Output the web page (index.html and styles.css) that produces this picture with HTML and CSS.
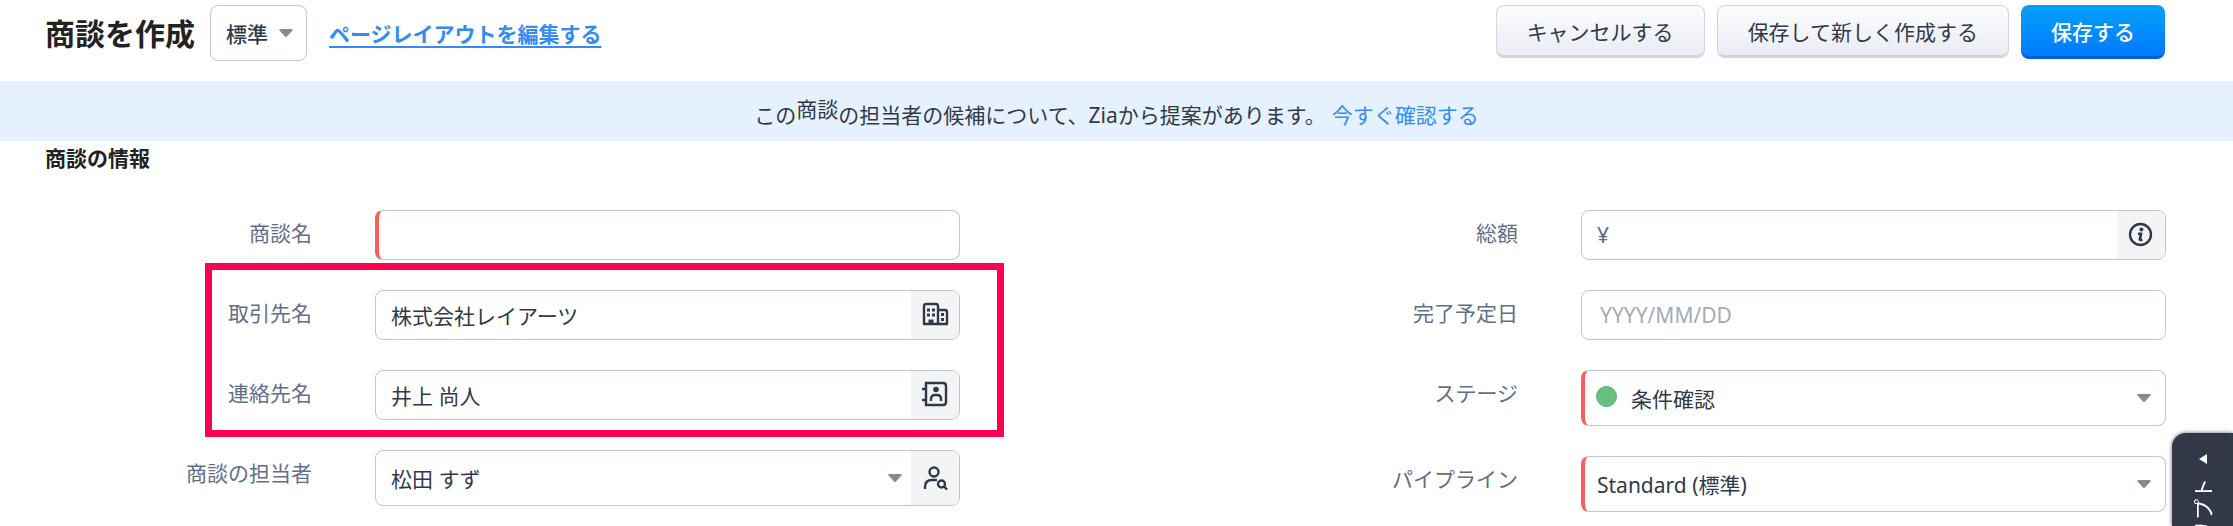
FILE: index.html
```html
<!DOCTYPE html>
<html lang="ja">

<head>
    <meta charset="UTF-8">
    <meta name="viewport" content="width=device-width, initial-scale=1.0">
    <title>商談を作成</title>
    <link rel="stylesheet" href="styles.css">
</head>

<body>
    <header class="page-header">
        <h1>商談を作成</h1>
        <div class="layout-select">
            <select aria-label="レイアウト">
                <option>標準</option>
            </select>
            <svg class="arrow" viewBox="0 0 14 8"><path d="M0.5 0h13v1.5L8 7.5q-1 1-2 0L0.5 1.5z"/></svg>
        </div>
        <a class="edit-layout" href="#">ページレイアウトを編集する</a>
        <div class="actions">
            <button type="button" class="btn">キャンセルする</button>
            <button type="button" class="btn">保存して新しく作成する</button>
            <button type="submit" form="deal-form" class="btn btn-primary">保存する</button>
        </div>
    </header>

    <div class="zia-banner">
        <p>この<span class="module-name">商談</span>の担当者の候補について、Ziaから提案があります。<a href="#">今すぐ確認する</a></p>
    </div>

    <main>
        <h2>商談の情報</h2>
        <form id="deal-form" class="form-grid">
            <div class="form-column">
                <div class="row">
                    <label for="deal-name">商談名</label>
                    <div class="field required">
                        <input type="text" id="deal-name">
                    </div>
                </div>
                <div class="highlight">
                    <div class="row">
                        <label for="account-name">取引先名</label>
                        <div class="field">
                            <input type="text" id="account-name" value="株式会社レイアーツ">
                            <button type="button" class="addon" aria-label="取引先を選択">
                                <svg width="28" height="28" viewBox="0 0 28 28" fill="none" stroke="#313949" stroke-width="2.4">
                                    <path d="M3 23V5q0-2 2-2h10q2 0 2 2v18M17 9h7q2 0 2 2v12M2 23h25"/>
                                    <path fill="#313949" stroke="none" d="M6 7.500h3v3H6zM11 7.500h3v3h-3zM6 12.500h3v3H6zM11 12.500h3v3h-3zM7.500 18.500h5V23h-5zM20 12h3v3h-3zM20 17h3v3h-3z"/>
                                </svg>
                            </button>
                        </div>
                    </div>
                    <div class="row">
                        <label for="contact-name">連絡先名</label>
                        <div class="field">
                            <input type="text" id="contact-name" value="井上 尚人">
                            <button type="button" class="addon" aria-label="連絡先を選択">
                                <svg width="28" height="28" viewBox="0 0 28 28" fill="none" stroke="#313949" stroke-width="2.4">
                                    <path d="M5 2h17q3 0 3 3v16q0 3-3 3H5zM1 8h4M1 19h4"/>
                                    <path d="M10 20v-2q0-4 4-4h2q4 0 4 4v2"/>
                                    <circle cx="15" cy="8.500" r="2.800" fill="#313949" stroke="none"/>
                                </svg>
                            </button>
                        </div>
                    </div>
                </div>
                <div class="row">
                    <label for="owner">商談の担当者</label>
                    <div class="field field-select">
                        <select id="owner">
                            <option>松田 すず</option>
                        </select>
                        <svg class="arrow arrow-addon" viewBox="0 0 14 8"><path d="M0.5 0h13v1.500L8 7.500q-1 1-2 0L0.5 1.500z"/></svg>
                        <button type="button" class="addon" aria-label="担当者を検索">
                            <svg width="28" height="28" viewBox="0 0 28 28" fill="none" stroke="#313949" stroke-width="2.4">
                                <circle cx="13" cy="8" r="4.500"/>
                                <path d="M4 25v-2q0-7 7-7h5"/>
                                <circle cx="20.500" cy="20" r="3.500"/>
                                <path d="M23 22.500l3 3"/>
                            </svg>
                        </button>
                    </div>
                </div>
            </div>

            <div class="form-column">
                <div class="row">
                    <label for="amount">総額</label>
                    <div class="field">
                        <span class="currency">¥</span>
                        <input type="text" id="amount">
                        <button type="button" class="addon" aria-label="総額の説明">
                            <svg width="28" height="28" viewBox="0 0 28 28" fill="none" stroke="#313949" stroke-width="2.4">
                                <circle cx="13.500" cy="13.500" r="10.500"/>
                                <circle cx="14.400" cy="8.500" r="2" fill="#313949" stroke="none"/>
                                <path d="M11 12.700h3l-1.200 5.800q0 1 2.500 0" stroke-width="2.600"/>
                            </svg>
                        </button>
                    </div>
                </div>
                <div class="row">
                    <label for="closing-date">完了予定日</label>
                    <div class="field">
                        <input type="text" id="closing-date" class="date" placeholder="YYYY/MM/DD">
                    </div>
                </div>
                <div class="row">
                    <label for="stage">ステージ</label>
                    <div class="field field-select required">
                        <span class="stage-dot"></span>
                        <select id="stage">
                            <option>条件確認</option>
                        </select>
                        <svg class="arrow" viewBox="0 0 14 8"><path d="M0.5 0h13v1.500L8 7.500q-1 1-2 0L0.5 1.500z"/></svg>
                    </div>
                </div>
                <div class="row">
                    <label for="pipeline">パイプライン</label>
                    <div class="field field-select required">
                        <select id="pipeline">
                            <option>Standard (標準)</option>
                        </select>
                        <svg class="arrow" viewBox="0 0 14 8"><path d="M0.5 0h13v1.500L8 7.500q-1 1-2 0L0.5 1.500z"/></svg>
                    </div>
                </div>
            </div>
        </form>
    </main>

    <button type="button" class="side-tab">
        <svg width="8" height="10" viewBox="0 0 8 10"><path d="M8 0v10L0 5z" fill="#fff"/></svg>
        <span>リプト</span>
    </button>
</body>

</html>
```

FILE: styles.css
```css
* {
    box-sizing: border-box;
}

body {
    margin: 0;
    font-family: "Noto Sans", "Noto Sans CJK JP", sans-serif;
    font-size: 21px;
    line-height: 30px;
    color: #313949;
    background-color: #fff;
    overflow: hidden;
}

button,
input,
select {
    font: inherit;
    color: inherit;
}

a {
    color: #338cf3;
}

.page-header {
    display: flex;
    align-items: flex-start;
    padding: 5px 68px 20px 45px;
}

h1 {
    margin: 0 15px 0 0;
    font-size: 30px;
    line-height: 58px;
    height: 56px;
    color: #222;
}

.layout-select {
    display: flex;
    align-items: center;
    position: relative;
    height: 56px;
    border: 1px solid #c0c6cf;
    border-radius: 8px;
    font-weight: 500;
}

.layout-select select {
    height: 54px;
    padding: 2px 38px 0 15px;
}

.arrow {
    width: 14px;
    height: 8px;
    fill: #858b95;
    pointer-events: none;
}

.layout-select .arrow {
    position: absolute;
    right: 13px;
}

select {
    appearance: none;
    border: none;
    background: none;
    outline: none;
}

.edit-layout {
    height: 56px;
    margin-left: 22px;
    line-height: 58px;
    font-weight: 700;
    text-underline-offset: 4px;
    text-decoration-thickness: 2px;
}

.actions {
    display: flex;
    gap: 12px;
    margin-left: auto;
}

.btn {
    height: 53px;
    padding: 2px 30px 0;
    border: 1px solid #d1d5e0;
    border-bottom-width: 3px;
    border-radius: 8px;
    background: linear-gradient(#fcfdff, #e9ecf4);
    cursor: pointer;
}

.btn-primary {
    height: 54px;
    border: none;
    border-bottom: 3px solid #0061d5;
    background: linear-gradient(#02a1f8, #0279ff);
    color: #fff;
    font-weight: 500;
}

.zia-banner {
    height: 60px;
    background-color: #e5f1fe;
    text-align: center;
}

.zia-banner p {
    margin: 0;
    line-height: 68px;
}

.zia-banner a {
    margin-left: 6px;
    text-decoration: none;
}

.module-name {
    display: inline-block;
    line-height: 30px;
    vertical-align: 6px;
}

main {
    padding: 0 67px 0 45px;
}

h2 {
    margin: 0;
    padding: 2px 0 37px;
    font-size: 21px;
    line-height: 30px;
    color: #222;
}

.form-grid {
    display: grid;
    grid-template-columns: 1fr 1fr;
    gap: 291px;
}

.form-column,
.highlight {
    display: flex;
    flex-direction: column;
    gap: 30px;
}

.row {
    display: grid;
    grid-template-columns: 267px 1fr;
    gap: 63px;
}

.row label {
    line-height: 46px;
    text-align: right;
    color: #616e88;
}

.field {
    display: flex;
    align-items: center;
    height: 50px;
    border: 1px solid #c0c6cf;
    border-radius: 8px;
    overflow: hidden;
}

.field-select {
    height: 56px;
}

.required {
    border-left: 4px solid #ff5d5a;
}

.field input,
.field select {
    flex: 1;
    min-width: 0;
    height: 100%;
    padding: 0 15px;
    border: none;
    outline: none;
    background: none;
}

.field select {
    padding-top: 2px;
}

.field.required select {
    padding-left: 12px;
}

.field .date {
    padding-left: 18px;
}

.field .date::placeholder {
    color: #a3abb9;
}

.field .arrow {
    margin-right: 14px;
}

.field .arrow-addon {
    margin-right: 9px;
}

.currency {
    padding-left: 15px;
    color: #616e88;
}

.addon {
    display: flex;
    align-items: center;
    justify-content: center;
    width: 48px;
    height: 100%;
    padding: 0;
    border: none;
    background-color: #f3f4f6;
    cursor: pointer;
}

.stage-dot {
    width: 21px;
    height: 21px;
    margin: 0 2px 4px 11px;
    border: 1px solid #56a772;
    border-radius: 50%;
    background-color: #66c07f;
}

/* frame over the account and contact rows */
.highlight {
    position: relative;
}

.highlight::after {
    content: "";
    position: absolute;
    inset: -27px -44px -17px 160px;
    border: 7px solid #ff0050;
    pointer-events: none;
}

.side-tab {
    position: fixed;
    top: 433px;
    right: 0;
    bottom: 0;
    display: flex;
    flex-direction: column;
    align-items: center;
    gap: 14px;
    width: 61px;
    padding: 21px 0 0;
    border: none;
    border-radius: 14px 0 0 0;
    background-color: #313949;
    box-shadow: 0 0 4px rgba(0, 0, 0, 0.6);
    color: #fff;
    overflow: hidden;
}

.side-tab svg,
.side-tab span {
    flex-shrink: 0;
}

.side-tab span {
    writing-mode: vertical-rl;
    text-orientation: sideways;
    white-space: nowrap;
    transform: rotate(180deg);
}
```
